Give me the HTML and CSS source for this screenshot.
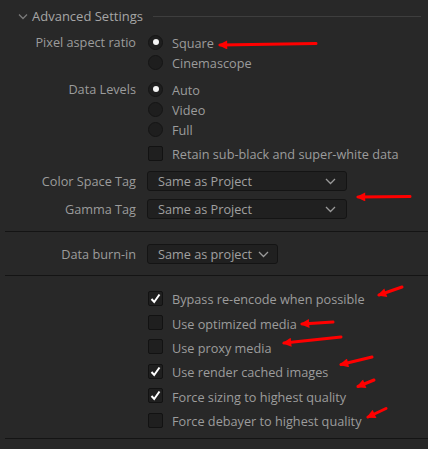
FILE: index.html
```html
<!DOCTYPE html>
<html>
<head>
<meta charset="utf-8">
<link rel="stylesheet" href="styles.css">
</head>
<body>
<div class="panel">
  <div class="section-head">
    <svg class="chev" width="10" height="7" viewBox="0 0 10 7"><path d="M1 1.5 L5 5.5 L9 1.5" fill="none" stroke="#7a7a7a" stroke-width="1.3"/></svg>
    <span class="head-title">Advanced Settings</span>
    <div class="head-rule"></div>
  </div>

  <div class="row r-pixel">
    <div class="label">Pixel aspect ratio</div>
    <div class="ctrl">
      <div class="opt"><span class="radio on"></span><span class="txt">Square</span></div>
      <div class="opt"><span class="radio"></span><span class="txt">Cinemascope</span></div>
    </div>
  </div>

  <div class="row r-levels">
    <div class="label">Data Levels</div>
    <div class="ctrl">
      <div class="opt"><span class="radio on"></span><span class="txt">Auto</span></div>
      <div class="opt"><span class="radio"></span><span class="txt">Video</span></div>
      <div class="opt"><span class="radio"></span><span class="txt">Full</span></div>
    </div>
  </div>

  <div class="row r-retain">
    <div class="label"></div>
    <div class="ctrl">
      <div class="opt"><span class="check"></span><span class="txt">Retain sub-black and super-white data</span></div>
    </div>
  </div>

  <div class="row r-color">
    <div class="label">Color Space Tag</div>
    <div class="ctrl">
      <div class="select wide"><span class="txt">Same as Project</span><svg class="dd" width="11" height="7" viewBox="0 0 11 7"><path d="M1 1 L5.5 5.5 L10 1" fill="none" stroke="#9a9a9a" stroke-width="1.3"/></svg></div>
    </div>
  </div>

  <div class="row r-gamma">
    <div class="label">Gamma Tag</div>
    <div class="ctrl">
      <div class="select wide"><span class="txt">Same as Project</span><svg class="dd" width="11" height="7" viewBox="0 0 11 7"><path d="M1 1 L5.5 5.5 L10 1" fill="none" stroke="#9a9a9a" stroke-width="1.3"/></svg></div>
    </div>
  </div>

  <div class="sep sep1"></div>

  <div class="row r-burn">
    <div class="label">Data burn-in</div>
    <div class="ctrl">
      <div class="select narrow"><span class="txt">Same as project</span><svg class="dd" width="11" height="7" viewBox="0 0 11 7"><path d="M1 1 L5.5 5.5 L10 1" fill="none" stroke="#9a9a9a" stroke-width="1.3"/></svg></div>
    </div>
  </div>

  <div class="sep sep2"></div>

  <div class="row r-checks">
    <div class="label"></div>
    <div class="ctrl checks">
      <div class="opt"><span class="check on"><svg width="13" height="13" viewBox="0 0 13 13"><path d="M2.5 7 L5.2 10 L10.5 2.5" fill="none" stroke="#fff" stroke-width="2"/></svg></span><span class="txt">Bypass re-encode when possible</span></div>
      <div class="opt"><span class="check"></span><span class="txt">Use optimized media</span></div>
      <div class="opt"><span class="check"></span><span class="txt">Use proxy media</span></div>
      <div class="opt"><span class="check on"><svg width="13" height="13" viewBox="0 0 13 13"><path d="M2.5 7 L5.2 10 L10.5 2.5" fill="none" stroke="#fff" stroke-width="2"/></svg></span><span class="txt">Use render cached images</span></div>
      <div class="opt"><span class="check on"><svg width="13" height="13" viewBox="0 0 13 13"><path d="M2.5 7 L5.2 10 L10.5 2.5" fill="none" stroke="#fff" stroke-width="2"/></svg></span><span class="txt">Force sizing to highest quality</span></div>
      <div class="opt"><span class="check"></span><span class="txt">Force debayer to highest quality</span></div>
    </div>
  </div>

  <div class="sep sep3"></div>

  <svg class="arrows" width="428" height="449" viewBox="0 0 428 449">
    <defs>
      <marker id="ah" viewBox="0 0 10 10" refX="8" refY="5" markerWidth="3.6" markerHeight="3" orient="auto" markerUnits="strokeWidth">
        <path d="M0 0 L10 5 L0 10 z" fill="#f00"/>
      </marker>
    </defs>
    <g stroke="#f00" stroke-width="3" stroke-linecap="round" marker-end="url(#ah)">
      <line x1="316" y1="43.5" x2="220" y2="45"/>
      <line x1="410" y1="196.5" x2="358" y2="197"/>
      <line x1="402" y1="287" x2="379" y2="295"/>
      <line x1="333" y1="322" x2="302" y2="324"/>
      <line x1="341" y1="337" x2="284" y2="343"/>
      <line x1="372" y1="357" x2="341" y2="364.5"/>
      <line x1="374" y1="380" x2="358" y2="386.5"/>
      <line x1="386" y1="408.5" x2="368" y2="417"/>
    </g>
  </svg>
</div>
</body>
</html>
```

FILE: styles.css
```css
html, body {
  margin: 0;
  padding: 0;
  background: #282828;
}

.panel {
  position: relative;
  width: 428px;
  height: 449px;
  overflow: hidden;
  font-family: "Open Sans", "Noto Sans", sans-serif;
  font-size: 12.7px;
  color: #9c9c9c;
}

.section-head {
  display: flex;
  align-items: center;
  height: 20px;
  padding-top: 6px;
  padding-left: 18px;
  padding-right: 7px;
}

.chev {
  margin-top: 1px;
  margin-right: 4px;
}

.head-title {
  color: #a6a6a6;
  line-height: 20px;
  font-size: 13px;
}

.head-rule {
  flex: 1;
  height: 1px;
  background: #3e3e3e;
  margin-left: 10px;
}

.row {
  display: grid;
  grid-template-columns: 136px 1fr;
  column-gap: 11px;
  align-items: start;
}

.label {
  text-align: right;
  line-height: 19px;
  padding-top: 1px;
  white-space: nowrap;
}

.ctrl {
  display: flex;
  flex-direction: column;
}

.opt {
  display: flex;
  align-items: center;
  height: 20px;
  white-space: nowrap;
}

.txt {
  padding-top: 2px;
  line-height: 18px;
}

.radio {
  box-sizing: border-box;
  width: 15px;
  height: 15px;
  border-radius: 50%;
  background: #1e1e1e;
  border: 1px solid #151515;
  margin-left: 1px;
  margin-right: 9px;
  display: flex;
  align-items: center;
  justify-content: center;
}

.radio.on::after {
  content: "";
  width: 6px;
  height: 6px;
  border-radius: 50%;
  background: #f4f4f4;
}

.check {
  box-sizing: border-box;
  width: 15px;
  height: 15px;
  border-radius: 2px;
  background: #1f1f1f;
  border: 1px solid #121212;
  margin-left: 1px;
  margin-right: 9px;
  display: flex;
  align-items: center;
  justify-content: center;
}

.check svg {
  display: block;
}

.r-pixel { margin-top: 6px; }
.r-levels { margin-top: 7px; }
.r-retain { margin-top: 4px; }
.r-color { margin-top: 8px; }
.r-gamma { margin-top: 8px; }
.r-burn { margin-top: 12px; }
.r-checks { margin-top: 10px; }

.select {
  box-sizing: border-box;
  height: 20px;
  display: flex;
  align-items: center;
  background: #202020;
  border: 1px solid #141414;
  border-radius: 3px;
  padding-left: 10px;
  color: #a0a0a0;
  white-space: nowrap;
}

.select .txt {
  padding-top: 1px;
  line-height: 17px;
}

.select.wide {
  width: 200px;
  padding-right: 10px;
  justify-content: space-between;
}

.select.narrow {
  width: 131px;
  padding-right: 8px;
}

.select.narrow .dd {
  margin-left: 6px;
  flex: none;
}

.checks .opt {
  height: 24.4px;
}

.sep {
  height: 1px;
  background: #141414;
  margin-left: 5px;
}

.sep1 { margin-top: 12px; }
.sep2 { margin-top: 11px; }
.sep3 { margin-top: 6px; }

.arrows {
  position: absolute;
  left: 0;
  top: 0;
  pointer-events: none;
}
```
